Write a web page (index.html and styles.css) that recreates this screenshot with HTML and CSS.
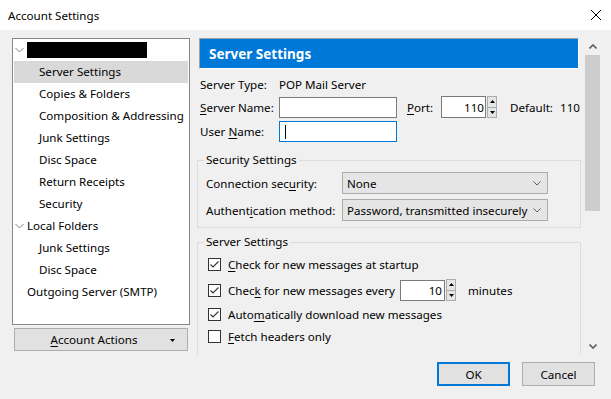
FILE: index.html
```html
<!DOCTYPE html>
<html lang="en">

<head>
    <meta charset="UTF-8">
    <title>Account Settings</title>
    <link rel="stylesheet" href="styles.css">
</head>

<body>
    <div class="titlebar">
        <span>Account Settings</span>
        <svg class="close" width="12" height="12" viewBox="0 0 12 12">
            <path d="M1 1 L11 11 M11 1 L1 11" stroke="#000" stroke-width="1" fill="none" />
        </svg>
    </div>

    <div class="main">
        <!-- Left: account tree -->
        <div class="sidebar">
            <div class="tree">
                <div class="tree-row level0">
                    <svg class="twisty" width="9" height="6" viewBox="0 0 9 6"><path d="M0.5 1 L4.5 5 L8.5 1" stroke="#838383" fill="none" /></svg>
                    <span class="redacted"></span>
                </div>
                <div class="tree-row level1 selected">Server Settings</div>
                <div class="tree-row level1">Copies &amp; Folders</div>
                <div class="tree-row level1">Composition &amp; Addressing</div>
                <div class="tree-row level1">Junk Settings</div>
                <div class="tree-row level1">Disc Space</div>
                <div class="tree-row level1">Return Receipts</div>
                <div class="tree-row level1">Security</div>
                <div class="tree-row level0">
                    <svg class="twisty" width="9" height="6" viewBox="0 0 9 6"><path d="M0.5 1 L4.5 5 L8.5 1" stroke="#838383" fill="none" /></svg>
                    Local Folders
                </div>
                <div class="tree-row level1">Junk Settings</div>
                <div class="tree-row level1">Disc Space</div>
                <div class="tree-row level0 leaf">Outgoing Server (SMTP)</div>
            </div>
            <button class="actions-btn">
                <span><u>A</u>ccount Actions</span>
                <svg class="drop" width="5" height="3" viewBox="0 0 5 3"><path d="M0 0 H5 L2.5 3 Z" fill="#000" /></svg>
            </button>
        </div>

        <!-- Right: scrolling settings pane -->
        <div class="panel">
            <div class="panel-content">
                <div class="panel-header">Server Settings</div>

                <div class="form-row row-type">
                    <span class="label">Server Type:</span>
                    <span>POP Mail Server</span>
                </div>
                <div class="form-row row-name">
                    <span class="label"><u>S</u>erver Name:</span>
                    <div class="textbox wide"></div>
                    <span class="port-label"><u>P</u>ort:</span>
                    <div class="textbox port">110</div>
                    <div class="spinner">
                        <span class="spin-btn"><svg width="5" height="3" viewBox="0 0 5 3"><path d="M0 3 H5 L2.5 0 Z" fill="#000" /></svg></span>
                        <span class="spin-btn"><svg width="5" height="3" viewBox="0 0 5 3"><path d="M0 0 H5 L2.5 3 Z" fill="#000" /></svg></span>
                    </div>
                    <span class="default-label">Default:</span>
                    <span>110</span>
                </div>
                <div class="form-row row-user">
                    <span class="label">User <u>N</u>ame:</span>
                    <div class="textbox wide focused"><span class="caret"></span></div>
                </div>

                <fieldset class="group security">
                    <legend>Security Settings</legend>
                    <div class="select-row">
                        <span class="select-label">Connection sec<u>u</u>rity:</span>
                        <div class="select"><span>None</span>
                            <svg width="8" height="5" viewBox="0 0 8 5"><path d="M0.5 0.5 L4 4 L7.5 0.5" stroke="#5f5f5f" fill="none" /></svg>
                        </div>
                    </div>
                    <div class="select-row">
                        <span class="select-label">Authent<u>i</u>cation method:</span>
                        <div class="select"><span>Password, transmitted insecurely</span>
                            <svg width="8" height="5" viewBox="0 0 8 5"><path d="M0.5 0.5 L4 4 L7.5 0.5" stroke="#5f5f5f" fill="none" /></svg>
                        </div>
                    </div>
                </fieldset>

                <fieldset class="group server">
                    <legend>Server Settings</legend>
                    <div class="check-row first">
                        <span class="checkbox checked"><svg width="11" height="11" viewBox="0 0 11 11"><path d="M1.5 5.5 L4 8 L9.5 2.5" stroke="#333" stroke-width="1.1" fill="none" /></svg></span>
                        <span><u>C</u>heck for new messages at startup</span>
                    </div>
                    <div class="check-row every">
                        <span class="checkbox checked"><svg width="11" height="11" viewBox="0 0 11 11"><path d="M1.5 5.5 L4 8 L9.5 2.5" stroke="#333" stroke-width="1.1" fill="none" /></svg></span>
                        <span class="every-label">Chec<u>k</u> for new messages every</span>
                        <div class="textbox minutes">10</div>
                        <div class="spinner small">
                            <span class="spin-btn"><svg width="5" height="3" viewBox="0 0 5 3"><path d="M0 3 H5 L2.5 0 Z" fill="#000" /></svg></span>
                            <span class="spin-btn"><svg width="5" height="3" viewBox="0 0 5 3"><path d="M0 0 H5 L2.5 3 Z" fill="#000" /></svg></span>
                        </div>
                        <span class="unit">minutes</span>
                    </div>
                    <div class="check-row">
                        <span class="checkbox checked"><svg width="11" height="11" viewBox="0 0 11 11"><path d="M1.5 5.5 L4 8 L9.5 2.5" stroke="#333" stroke-width="1.1" fill="none" /></svg></span>
                        <span>Auto<u>m</u>atically download new messages</span>
                    </div>
                    <div class="check-row">
                        <span class="checkbox"></span>
                        <span><u>F</u>etch headers only</span>
                    </div>
                </fieldset>
            </div>

            <div class="scrollbar">
                <div class="arrow">
                    <svg width="8" height="5" viewBox="0 0 8 5"><path d="M0.5 4.5 L4 1 L7.5 4.5" stroke="#606060" stroke-width="1.6" fill="none" /></svg>
                </div>
                <div class="thumb"></div>
                <div class="track"></div>
                <div class="arrow">
                    <svg width="8" height="5" viewBox="0 0 8 5"><path d="M0.5 0.5 L4 4 L7.5 0.5" stroke="#606060" stroke-width="1.6" fill="none" /></svg>
                </div>
            </div>
        </div>
    </div>

    <div class="footer">
        <button class="btn btn-default">OK</button>
        <button class="btn">Cancel</button>
    </div>
</body>

</html>
```

FILE: styles.css
```css
* {
    box-sizing: border-box;
    margin: 0;
    padding: 0;
}

body {
    font-family: "Noto Sans", "Open Sans", sans-serif;
    font-size: 11.6px;
    color: #000;
    background-color: #f0f0f0;
    width: 611px;
    height: 399px;
    overflow: hidden;
    white-space: nowrap;
}

u {
    text-decoration-thickness: 1px;
    text-underline-offset: 2px;
}

/* Window title */
.titlebar {
    height: 30px;
    background-color: #ffffff;
    display: flex;
    align-items: center;
    justify-content: space-between;
    padding: 0 9px 0 8px;
}

.close {
    display: block;
}

.main {
    display: flex;
    gap: 7px;
    padding: 8px 0 0 12px;
    height: 325px;
}

/* Account tree */
.sidebar {
    width: 178px;
    display: flex;
    flex-direction: column;
}

.tree {
    height: 287px;
    background-color: #ffffff;
    border: 1px solid #828790;
    padding: 0 1px;
}

.tree-row {
    height: 22px;
    display: flex;
    align-items: center;
    padding-bottom: 1px;
}

.tree-row.level0 {
    padding-left: 1px;
}

.tree-row.leaf {
    padding-left: 13px;
}

.tree-row.level1 {
    padding-left: 25px;
}

.tree-row.selected {
    background-color: #d9d9d9;
}

.twisty {
    margin: 0 3px 0 0;
}

.redacted {
    display: inline-block;
    width: 120px;
    height: 16px;
    background-color: #000;
}

.actions-btn {
    margin: 3px 2px 0;
    height: 23px;
    background-color: #e1e1e1;
    border: 1px solid #adadad;
    font: inherit;
    display: flex;
    align-items: center;
    justify-content: center;
    position: relative;
    padding-right: 14px;
}

.actions-btn .drop {
    position: absolute;
    right: 12px;
    top: 10px;
}

/* Settings pane */
.panel {
    width: 403px;
    height: 317px;
    display: flex;
}

.panel-content {
    flex: 1;
    overflow: hidden;
}

.panel-header {
    margin-left: 2px;
    width: 380px;
    height: 31px;
    background-color: #0078d7;
    border: 1px solid #ffffff;
    border-top-color: #a0a0a0;
    border-left-color: #a0a0a0;
    color: #ffffff;
    font-weight: bold;
    font-size: 13.5px;
    display: flex;
    align-items: center;
    padding-left: 9px;
}

.form-row {
    display: flex;
    align-items: center;
    padding-left: 3px;
}

.form-row .label {
    width: 79px;
}

.row-type {
    height: 20px;
    margin-top: 5px;
}

.row-name {
    height: 22px;
    margin-top: 2px;
}

.row-user {
    height: 21px;
    margin-top: 3px;
}

.textbox {
    height: 21px;
    background-color: #ffffff;
    border: 1px solid #7a7a7a;
    display: flex;
    align-items: center;
}

.textbox.wide {
    width: 118px;
}

.textbox.focused {
    border-color: #0078d7;
    padding-left: 5px;
}

.caret {
    width: 1px;
    height: 14px;
    background-color: #000;
}

.port-label {
    margin-left: 10px;
    width: 34px;
}

.textbox.port {
    width: 45px;
    height: 22px;
    justify-content: flex-end;
    padding-right: 1px;
}

.spinner {
    width: 10px;
    height: 22px;
    margin-left: 1px;
    display: flex;
    flex-direction: column;
}

.spin-btn {
    flex: 1;
    background-color: #e5e5e5;
    border: 1px solid #acacac;
    display: flex;
    align-items: center;
    justify-content: center;
}

.spin-btn + .spin-btn {
    border-top: none;
}

.default-label {
    margin-left: 13px;
    width: 50px;
}

/* Group boxes */
.group {
    border: 1px solid #dcdcdc;
    width: 384px;
    padding: 0 8px;
}

.group legend {
    padding: 0 2px;
    margin-left: -2px;
    line-height: 16px;
}

.group.security {
    margin-top: 10px;
    padding-top: 4px;
    padding-bottom: 6px;
}

.select-row {
    display: flex;
    align-items: center;
}

.select-row + .select-row {
    margin-top: 5px;
}

.select-label {
    width: 136px;
}

.select {
    width: 206px;
    height: 22px;
    background-color: #e5e5e5;
    border: 1px solid #acacac;
    display: flex;
    align-items: center;
    justify-content: space-between;
    padding: 0 6px 0 4px;
}

.group.server {
    margin-top: 6px;
    padding-top: 4px;
    padding-bottom: 10px;
    padding-left: 10px;
}

.group.server legend {
    margin-left: -4px;
}

.check-row {
    display: flex;
    align-items: center;
    height: 20px;
    margin-top: 2px;
}

.check-row.first {
    margin-top: 0;
}

.check-row.every {
    height: 22px;
    margin-top: 5px;
    margin-bottom: 3px;
}

.checkbox {
    width: 13px;
    height: 13px;
    border: 1px solid #333333;
    background-color: #ffffff;
    margin-right: 7px;
    display: flex;
    align-items: center;
    justify-content: center;
}

.every-label {
    width: 172px;
}

.textbox.minutes {
    width: 45px;
    height: 21px;
    justify-content: flex-end;
    padding-right: 2px;
}

.unit {
    margin-left: 12px;
}

/* Scrollbar */
.scrollbar {
    width: 15px;
    display: flex;
    flex-direction: column;
    background-color: #f0f0f0;
}

.scrollbar .arrow {
    height: 17px;
    display: flex;
    align-items: center;
    justify-content: center;
}

.thumb {
    height: 156px;
    background-color: #cdcdcd;
}

.track {
    flex: 1;
}

/* Dialog buttons */
.footer {
    display: flex;
    justify-content: flex-end;
    gap: 12px;
    padding: 7px 16px 0 0;
}

.btn {
    width: 73px;
    height: 24px;
    background-color: #e1e1e1;
    border: 1px solid #adadad;
    font: inherit;
}

.btn-default {
    border: 2px solid #0078d7;
}
```
